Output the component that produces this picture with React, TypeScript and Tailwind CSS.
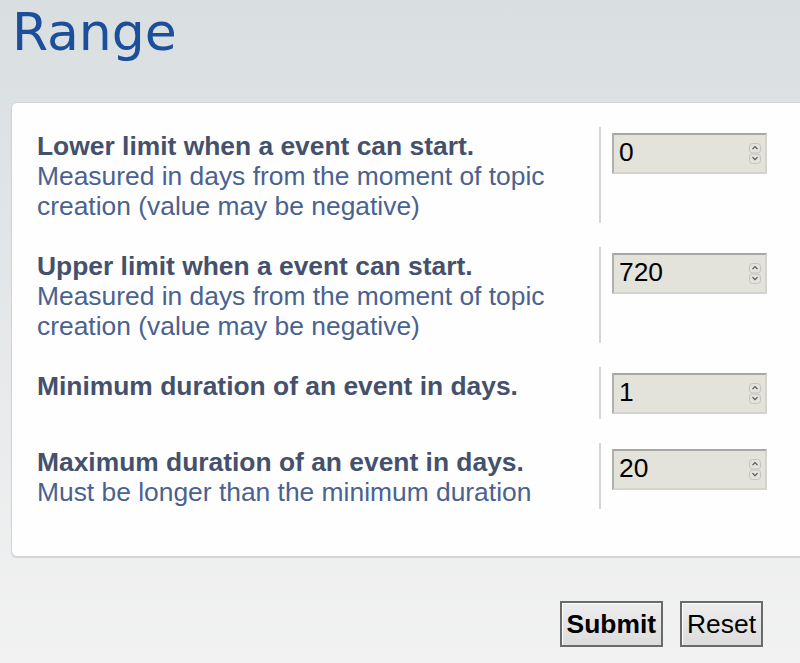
const rows = [
  {
    label: "Lower limit when a event can start.",
    hint: "Measured in days from the moment of topic creation (value may be negative)",
    value: "0",
  },
  {
    label: "Upper limit when a event can start.",
    hint: "Measured in days from the moment of topic creation (value may be negative)",
    value: "720",
  },
  { label: "Minimum duration of an event in days.", value: "1" },
  {
    label: "Maximum duration of an event in days.",
    hint: "Must be longer than the minimum duration",
    value: "20",
  },
];

function Spinner() {
  return (
    <svg width="12" height="21" viewBox="0 0 12 21" className="shrink-0">
      <rect x="0.5" y="0.5" width="11" height="9.5" rx="3" fill="none" stroke="#c4c3bc" />
      <path d="M3.5 6.2 L6 3.7 L8.5 6.2" fill="none" stroke="#555" strokeWidth="1.2" />
      <rect x="0.5" y="11" width="11" height="9.5" rx="3" fill="none" stroke="#c4c3bc" />
      <path d="M3.5 14.2 L6 16.7 L8.5 14.2" fill="none" stroke="#555" strokeWidth="1.2" />
    </svg>
  );
}

function NumberField({ value }: { value: string }) {
  return (
    <div className="w-[155px] h-[41px] flex items-center justify-between pl-[5px] pr-[4px] bg-[#e3e2db] border-2 border-t-[#a8a8a3] border-l-[#b0b0aa] border-b-[#d4d3cc] border-r-[#d4d3cc] text-[26.4px] leading-[30px] text-black">
      <span className="-mt-[3px]">{value}</span>
      <Spinner />
    </div>
  );
}

export default function App() {
  return (
    <div className="w-[800px] h-[663px] overflow-hidden bg-gradient-to-b from-[#d9dee1] to-[#f2f2f2] font-['Liberation_Sans',Arial,sans-serif]">
      <h1 className="ml-[12px] mt-[2px] text-[52px] leading-[60px] text-[#1b4f9b] font-['DejaVu_Sans',sans-serif]">
        Range
      </h1>

      <div className="mt-[40px] ml-[11px] w-[820px] bg-[#fefefe] border border-[#d4d4d4] rounded-[6px] shadow-[0_1px_1px_rgba(0,0,0,0.12)] pl-[25px] pt-[24px] pb-[47px] flex flex-col gap-[24px]">
        {rows.map((r) => (
          <div key={r.label} className="flex">
            <div className="w-[562px] pt-[4px] pb-[2px] text-[26.4px] leading-[30px]">
              <div className="font-bold text-[#45516c]">{r.label}</div>
              {r.hint && <div className="text-[#4a6290]">{r.hint}</div>}
            </div>
            <div className="border-l-2 border-[#d5d5d5] pl-[11px] pt-[6px] pb-[5px]">
              <NumberField value={r.value} />
            </div>
          </div>
        ))}
      </div>

      <div className="mt-[44px] pr-[37px] flex justify-end gap-[17px]">
        <button className="h-[46px] px-[5px] border-2 border-[#6a6a6a] bg-gradient-to-b from-[#ededed] to-[#dcdcdc] shadow-[inset_1px_1px_0_#fff] text-[26.4px] leading-[30px] font-bold text-black">
          Submit
        </button>
        <button className="h-[46px] px-[5px] border-2 border-[#6a6a6a] bg-gradient-to-b from-[#ededed] to-[#dcdcdc] shadow-[inset_1px_1px_0_#fff] text-[26.4px] leading-[30px] text-black">
          Reset
        </button>
      </div>
    </div>
  );
}
